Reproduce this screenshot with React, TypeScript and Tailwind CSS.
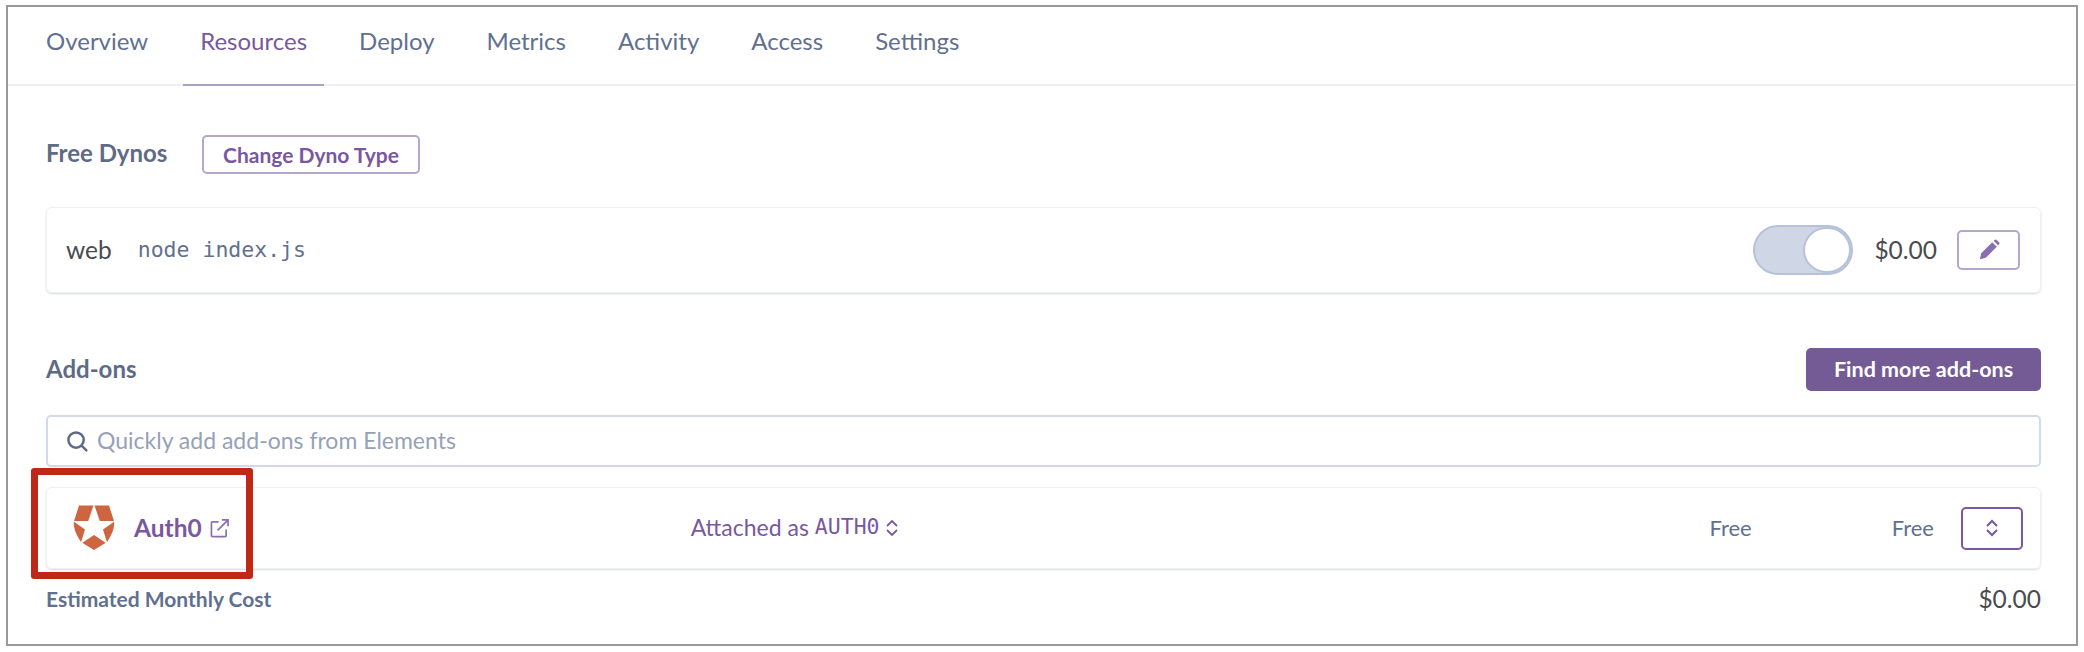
const tabs = ["Overview", "Resources", "Deploy", "Metrics", "Activity", "Access", "Settings"]

const App = () => {
  return (
    <div className="w-[2084px] h-[652px] bg-white pt-[5px] pl-[6px] font-['Lato',sans-serif]">
      <div className="relative w-[2072px] h-[641px] border-2 border-[#999999] bg-white">
        {/* tabs */}
        <div className="flex h-[79px] gap-[18px] pl-[21px] border-b-2 border-[#eef0f5]">
          {tabs.map((tab) => (
            <div
              key={tab}
              className={`flex h-[79px] items-start px-[17px] pt-[19px] text-[24px] leading-[30px] ${
                tab === "Resources" ? "border-b-2 border-[#ae9fc4] text-[#79589f]" : "text-[#62708f]"
              }`}
            >
              {tab}
            </div>
          ))}
        </div>

        <div className="pl-[38px] pr-[35px]">
          {/* free dynos */}
          <div className="flex items-center h-[39px] mt-[49px]">
            <span className="w-[156px] -mt-[3px] text-[24px] font-bold text-[#5f6b86]">Free Dynos</span>
            <button className="w-[218px] h-[39px] rounded-[5px] border-2 border-[#b5a7cb] text-[21px] font-bold text-[#79589f]">
              Change Dyno Type
            </button>
          </div>

          <div className="flex items-center h-[86px] mt-[33px] pl-[19px] pr-[20px] rounded-[6px] border border-[#eef0f5] shadow-[0_1px_2px_rgba(98,112,143,0.25)]">
            <span className="text-[24.5px] text-[#4a4a4f]">web</span>
            <span className="ml-[26px] font-['DejaVu_Sans_Mono',monospace] text-[21.5px] text-[#62708f]">node index.js</span>
            <div className="ml-auto flex h-[50px] w-[100px] justify-end rounded-full border-2 border-[#b7c2da] bg-[#cfd7e6]">
              <div className="h-[46px] w-[48px] rounded-full border-2 border-[#b7c2da] bg-white" />
            </div>
            <span className="ml-[21px] text-[24.5px] text-[#4a4a4f]">$0.00</span>
            <button className="ml-[20px] flex h-[40px] w-[63px] items-center justify-center rounded-[5px] border-2 border-[#b5a7cb]">
              <svg viewBox="0 0 24 24" className="h-[22px] w-[22px] fill-[#8a6fb0]">
                <path d="M2 22l1.5-6.5L15.5 3.5l5 5L8.5 20.5 2 22zM17 2l1.2-1a1.6 1.6 0 0 1 2.2 0l2.6 2.6a1.6 1.6 0 0 1 0 2.2L22 7 17 2z" />
              </svg>
            </button>
          </div>

          {/* add-ons */}
          <div className="flex items-center justify-between mt-[55px] h-[43px]">
            <span className="-mt-[2px] text-[24px] font-bold text-[#5f6b86]">Add-ons</span>
            <button className="w-[235px] h-[43px] rounded-[5px] bg-[#745b96] text-[21.5px] font-bold text-white">
              Find more add-ons
            </button>
          </div>

          <div className="flex items-center h-[52px] mt-[24px] pl-[18px] rounded-[5px] border-2 border-[#d3d9e8]">
            <svg viewBox="0 0 24 24" className="h-[23px] w-[23px] fill-none stroke-[#5f6b86] stroke-[2.6]">
              <circle cx="10.5" cy="10.5" r="8" />
              <path d="M16.5 16.5L22 22" />
            </svg>
            <span className="ml-[8px] -mt-[1px] text-[23px] text-[#96a1b8]">Quickly add add-ons from Elements</span>
          </div>

          <div className="flex items-center h-[82px] mt-[20px] pl-[26px] pr-[17px] rounded-[6px] border border-[#eef0f5] shadow-[0_1px_2px_rgba(98,112,143,0.25)]">
            <svg viewBox="0 0 42 46" className="-mt-[2px] h-[46px] w-[42px] shrink-0">
              <path fill="#cd6540" d="M6 1.5h30l5 15.5c1 8-3 15-7 21L21 46 8 38C4 32 0 25 1 17z" />
              <path fill="#fff" d="M21 0l5.8 17H42l-12 8.6L34.5 40 21 31 7.5 40 12 25.6 0 17h15.2z" />
            </svg>
            <span className="ml-[19px] text-[24.5px] font-bold text-[#79589f]">Auth0</span>
            <svg viewBox="0 0 20 20" className="ml-[8px] h-[19px] w-[19px] fill-none stroke-[#8a6fb0] stroke-[1.8]">
              <path d="M9 3H2.5a1 1 0 0 0-1 1v13.5a1 1 0 0 0 1 1H16a1 1 0 0 0 1-1V11M8 12L18.5 1.5M12.5 1h6.5v6.5" />
            </svg>
            <span className="ml-[462px] -mt-[2px] text-[23px] text-[#79589f]">Attached as</span>
            <span className="ml-[6px] -mt-[2px] font-['DejaVu_Sans_Mono',monospace] text-[21.5px] text-[#79589f]">AUTH0</span>
            <svg viewBox="0 0 14 18" className="ml-[5px] h-[18px] w-[14px] fill-none stroke-[#79589f] stroke-[1.8]">
              <path d="M2 7l5-5 5 5M2 11l5 5 5-5" />
            </svg>
            <span className="ml-auto -mt-[2px] text-[22px] text-[#62708f]">Free</span>
            <span className="ml-[140px] -mt-[2px] text-[22px] text-[#62708f]">Free</span>
            <button className="ml-[27px] flex h-[43px] w-[62px] items-center justify-center rounded-[5px] border-2 border-[#79589f]">
              <svg viewBox="0 0 14 18" className="h-[18px] w-[14px] fill-none stroke-[#79589f] stroke-2">
                <path d="M2 7l5-5 5 5M2 11l5 5 5-5" />
              </svg>
            </button>
          </div>

          <div className="flex items-center justify-between mt-[14px] h-[32px]">
            <span className="text-[21px] font-bold text-[#62708f]">Estimated Monthly Cost</span>
            <span className="text-[24.5px] text-[#4a4a4f]">$0.00</span>
          </div>
        </div>

        {/* red highlight over the Auth0 row */}
        <div className="absolute left-[23px] top-[461px] h-[111px] w-[222px] rounded-[3px] border-[7px] border-[#bf2717]" />
      </div>
    </div>
  )
}

export default App
